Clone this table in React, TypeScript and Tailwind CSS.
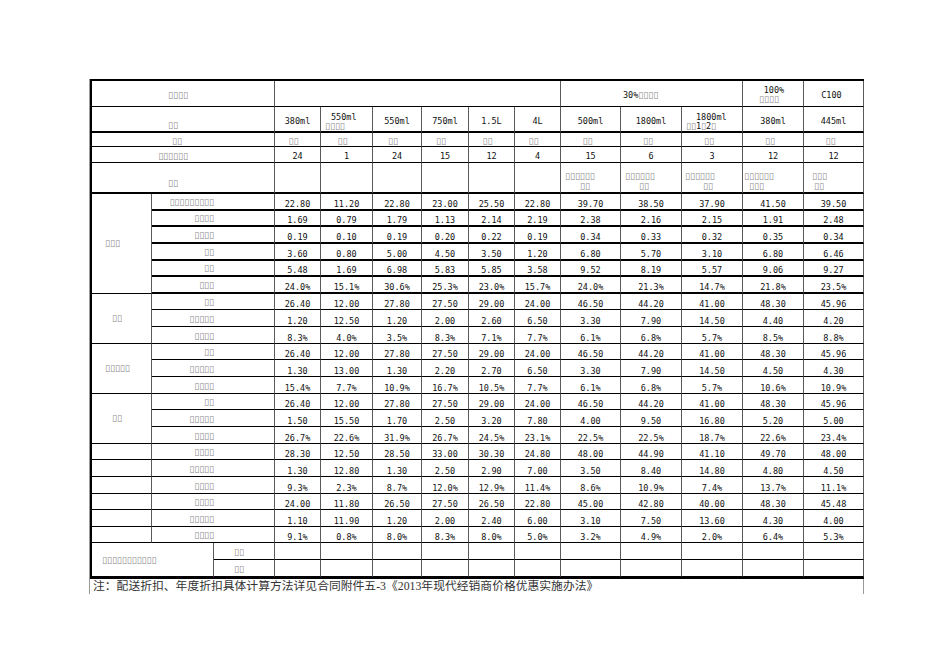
import React from "react";

const T = (n: number) => "\u25AF".repeat(n);

type Row = { label: string; vals: string[] };

const sec1: Row[] = [
  { label: T(9), vals: ["22.80", "11.20", "22.80", "23.00", "25.50", "22.80", "39.70", "38.50", "37.90", "41.50", "39.50"] },
  { label: T(4), vals: ["1.69", "0.79", "1.79", "1.13", "2.14", "2.19", "2.38", "2.16", "2.15", "1.91", "2.48"] },
  { label: T(4), vals: ["0.19", "0.10", "0.19", "0.20", "0.22", "0.19", "0.34", "0.33", "0.32", "0.35", "0.34"] },
  { label: T(2), vals: ["3.60", "0.80", "5.00", "4.50", "3.50", "1.20", "6.80", "5.70", "3.10", "6.80", "6.46"] },
  { label: T(2), vals: ["5.48", "1.69", "6.98", "5.83", "5.85", "3.58", "9.52", "8.19", "5.57", "9.06", "9.27"] },
  { label: T(3), vals: ["24.0%", "15.1%", "30.6%", "25.3%", "23.0%", "15.7%", "24.0%", "21.3%", "14.7%", "21.8%", "23.5%"] },
];
const sec2: Row[] = [
  { label: T(2), vals: ["26.40", "12.00", "27.80", "27.50", "29.00", "24.00", "46.50", "44.20", "41.00", "48.30", "45.96"] },
  { label: T(5), vals: ["1.20", "12.50", "1.20", "2.00", "2.60", "6.50", "3.30", "7.90", "14.50", "4.40", "4.20"] },
  { label: T(4), vals: ["8.3%", "4.0%", "3.5%", "8.3%", "7.1%", "7.7%", "6.1%", "6.8%", "5.7%", "8.5%", "8.8%"] },
];
const sec3: Row[] = [
  { label: T(2), vals: ["26.40", "12.00", "27.80", "27.50", "29.00", "24.00", "46.50", "44.20", "41.00", "48.30", "45.96"] },
  { label: T(5), vals: ["1.30", "13.00", "1.30", "2.20", "2.70", "6.50", "3.30", "7.90", "14.50", "4.50", "4.30"] },
  { label: T(4), vals: ["15.4%", "7.7%", "10.9%", "16.7%", "10.5%", "7.7%", "6.1%", "6.8%", "5.7%", "10.6%", "10.9%"] },
];
const sec4: Row[] = [
  { label: T(2), vals: ["26.40", "12.00", "27.80", "27.50", "29.00", "24.00", "46.50", "44.20", "41.00", "48.30", "45.96"] },
  { label: T(5), vals: ["1.50", "15.50", "1.70", "2.50", "3.20", "7.80", "4.00", "9.50", "16.80", "5.20", "5.00"] },
  { label: T(4), vals: ["26.7%", "22.6%", "31.9%", "26.7%", "24.5%", "23.1%", "22.5%", "22.5%", "18.7%", "22.6%", "23.4%"] },
];
const sec5: Row[] = [
  { label: T(4), vals: ["28.30", "12.50", "28.50", "33.00", "30.30", "24.80", "48.00", "44.90", "41.10", "49.70", "48.00"] },
  { label: T(5), vals: ["1.30", "12.80", "1.30", "2.50", "2.90", "7.00", "3.50", "8.40", "14.80", "4.80", "4.50"] },
  { label: T(4), vals: ["9.3%", "2.3%", "8.7%", "12.0%", "12.9%", "11.4%", "8.6%", "10.9%", "7.4%", "13.7%", "11.1%"] },
  { label: T(4), vals: ["24.00", "11.80", "26.50", "27.50", "26.50", "22.80", "45.00", "42.80", "40.00", "48.30", "45.48"] },
  { label: T(5), vals: ["1.10", "11.90", "1.20", "2.00", "2.40", "6.00", "3.10", "7.50", "13.60", "4.30", "4.00"] },
  { label: T(4), vals: ["9.1%", "0.8%", "8.0%", "8.3%", "8.0%", "5.0%", "3.2%", "4.9%", "2.0%", "6.4%", "5.3%"] },
];

const cell = "border-r border-b border-r-[#5a5a5a] border-b-black";
const thick = "border-r border-b-2 border-r-[#5a5a5a] border-b-black";
const tofu = "font-['DejaVu_Sans',sans-serif] text-[9px] text-[#8a8a8a] leading-[9px]";
const num = "font-['DejaVu_Sans_Mono',monospace] text-[8.5px] text-[#111] leading-[7px]";

function NumCell({ v, heavy }: { v: string; heavy: boolean }) {
  return (
    <div className={`${heavy ? thick : cell} flex items-end justify-center pb-[1px]`}>
      <span className={num}>{v}</span>
    </div>
  );
}

function Label({ text, heavy }: { text: string; heavy: boolean }) {
  return (
    <div className={`${heavy ? thick : cell} col-span-2 flex items-end justify-end pr-[60px] pb-[2px]`}>
      <span className={tofu}>{text}</span>
    </div>
  );
}

function Rows({ rows, heavy }: { rows: Row[]; heavy: boolean }) {
  return (
    <>
      {rows.map((r, i) => (
        <React.Fragment key={i}>
          <Label text={r.label} heavy={heavy} />
          {r.vals.map((v, j) => (
            <NumCell key={j} v={v} heavy={heavy} />
          ))}
        </React.Fragment>
      ))}
    </>
  );
}

function Group({ text, span, pl, heavy }: { text: string; span: string; pl: string; heavy: boolean }) {
  return (
    <div className={`${heavy ? thick : cell} ${span} flex items-center ${pl}`}>
      <span className={tofu}>{text}</span>
    </div>
  );
}

const sizes = ["380ml", "550ml", "550ml", "750ml", "1.5L", "4L", "500ml", "1800ml", "1800ml", "380ml", "445ml"];
const counts = ["24", "1", "24", "15", "12", "4", "15", "6", "3", "12", "12"];

export default function App() {
  return (
    <div className="min-h-[672px] w-[950px] bg-white pt-[79px] pl-[89px]">
      <div className="w-[775px] border-l border-l-[#999]">
        <div className="border-l-2 border-l-black border-t-2 border-t-black border-b-2 border-b-black grid grid-cols-[60px_62px_61px_46px_52px_49px_47px_46px_46px_60px_61px_61px_61px_60px] grid-rows-[26px_26px_14px_16px_31px_repeat(23,16.65px)]">
          {/* header row 1 */}
          <div className={`${cell} col-span-3 flex items-end justify-center pb-[6px] pr-[10px]`}>
            <span className={tofu}>{T(4)}</span>
          </div>
          <div className={`${cell} col-span-6`} />
          <div className={`${cell} col-span-3 flex items-center pl-[62px] pt-[4px]`}>
            <span className={`${num} leading-[9px]`}>30%</span>
            <span className={tofu}>{T(4)}</span>
          </div>
          <div className={`${cell} flex flex-col items-center justify-center pt-[2px]`}>
            <span className={`${num} leading-[9px] pl-[2px]`}>100%</span>
            <span className={`${tofu} pr-[8px]`}>{T(4)}</span>
          </div>
          <div className={`${cell} flex items-center justify-center pt-[4px]`}>
            <span className={`${num} leading-[9px] pr-[4px]`}>C100</span>
          </div>

          {/* header row 2 */}
          <div className={`${thick} col-span-3 flex items-end justify-center pb-[1px] pr-[20px]`}>
            <span className={tofu}>{T(2)}</span>
          </div>
          {sizes.map((s, i) =>
            i === 1 ? (
              <div key={i} className={`${thick} flex flex-col items-start justify-end pl-[4px]`}>
                <span className={`${num} leading-[10px] pl-[6px]`}>550ml</span>
                <span className={`${tofu} leading-[9px]`}>{T(4)}</span>
              </div>
            ) : i === 8 ? (
              <div key={i} className={`${thick} flex flex-col items-start justify-end pl-[4px]`}>
                <span className={`${num} leading-[10px] pl-[10px]`}>1800ml</span>
                <span className={`${tofu} leading-[9px]`}>
                  {T(2)}
                  <span className={num}>1</span>
                  {T(1)}
                  <span className={num}>2</span>
                  {T(1)}
                </span>
              </div>
            ) : (
              <div key={i} className={`${thick} flex items-center justify-center pt-[5px]`}>
                <span className={`${num} leading-[9px]`}>{s}</span>
              </div>
            )
          )}

          {/* header row 3 */}
          <div className={`${cell} col-span-3 flex items-end justify-center pr-[12px]`}>
            <span className={`${tofu} leading-[8px]`}>{T(2)}</span>
          </div>
          {sizes.map((_, i) => (
            <div key={i} className={`${cell} flex items-end justify-center ${i >= 6 ? "pr-[6px]" : "pr-[8px]"}`}>
              <span className={`${tofu} leading-[8px]`}>{T(2)}</span>
            </div>
          ))}

          {/* header row 4 */}
          <div className={`${cell} border-b-[#777] col-span-3 flex items-end justify-center pr-[20px] pb-[1px]`}>
            <span className={tofu}>{T(6)}</span>
          </div>
          {counts.map((c, i) => (
            <div key={i} className={`${cell} border-b-[#777] flex items-end justify-center pb-[2px]`}>
              <span className={num}>{c}</span>
            </div>
          ))}

          {/* header row 5 */}
          <div className={`${thick} col-span-3 flex items-end justify-center pb-[4px] pr-[20px]`}>
            <span className={tofu}>{T(2)}</span>
          </div>
          {[0, 1, 2, 3, 4, 5].map((i) => (
            <div key={i} className={thick} />
          ))}
          <div className={`${thick} flex flex-col justify-end pb-[1px]`}>
            <span className={`${tofu} pl-[4px] leading-[10px]`}>{T(6)}</span>
            <span className={`${tofu} pl-[19px] leading-[10px]`}>{T(2)}</span>
          </div>
          <div className={`${thick} flex flex-col justify-end pb-[1px]`}>
            <span className={`${tofu} pl-[4px] leading-[10px]`}>{T(6)}</span>
            <span className={`${tofu} pl-[18px] leading-[10px]`}>{T(2)}</span>
          </div>
          <div className={`${thick} flex flex-col justify-end pb-[1px]`}>
            <span className={`${tofu} pl-[3px] leading-[10px]`}>{T(6)}</span>
            <span className={`${tofu} pl-[21px] leading-[10px]`}>{T(2)}</span>
          </div>
          <div className={`${thick} flex flex-col justify-end pb-[1px]`}>
            <span className={`${tofu} pl-[1px] leading-[10px]`}>{T(6)}</span>
            <span className={`${tofu} pl-[6px] leading-[10px]`}>{T(3)}</span>
          </div>
          <div className={`${thick} flex flex-col justify-end pb-[1px]`}>
            <span className={`${tofu} pl-[8px] leading-[10px]`}>{T(3)}</span>
            <span className={`${tofu} pl-[10px] leading-[10px]`}>{T(2)}</span>
          </div>

          {/* data sections */}
          <Group text={T(3)} span="row-span-6" pl="pl-[13px]" heavy={false} />
          <Rows rows={sec1} heavy={true} />
          <Group text={T(2)} span="row-span-3" pl="pl-[20px]" heavy={false} />
          <Rows rows={sec2} heavy={false} />
          <Group text={T(5)} span="row-span-3" pl="pl-[13px]" heavy={false} />
          <Rows rows={sec3} heavy={false} />
          <Group text={T(2)} span="row-span-3" pl="pl-[20px]" heavy={false} />
          <Rows rows={sec4} heavy={false} />
          {sec5.map((r, i) => (
            <React.Fragment key={i}>
              <div className={cell} />
              <Label text={r.label} heavy={false} />
              {r.vals.map((v, j) => (
                <NumCell key={j} v={v} heavy={false} />
              ))}
            </React.Fragment>
          ))}

          {/* last two rows */}
          <div className={`${cell} col-span-2 row-span-2 flex items-center pl-[10px] pt-[2px]`}>
            <span className={tofu}>{T(11)}</span>
          </div>
          {[0, 1].map((k) => (
            <React.Fragment key={k}>
              <div className={`${cell} flex items-end justify-center pb-[2px] pr-[10px]`}>
                <span className={tofu}>{T(2)}</span>
              </div>
              {sizes.map((_, i) => (
                <div key={i} className={cell} />
              ))}
            </React.Fragment>
          ))}
        </div>
        <div className="h-[15px] border-r border-r-[#999] pl-[3px] flex items-center">
          <span className="font-['Liberation_Serif','Noto_Sans_CJK_SC',serif] text-[11.8px] leading-[13px] text-[#333]">
            注：配送折扣、年度折扣具体计算方法详见合同附件五-3《2013年现代经销商价格优惠实施办法》
          </span>
        </div>
      </div>
    </div>
  );
}
